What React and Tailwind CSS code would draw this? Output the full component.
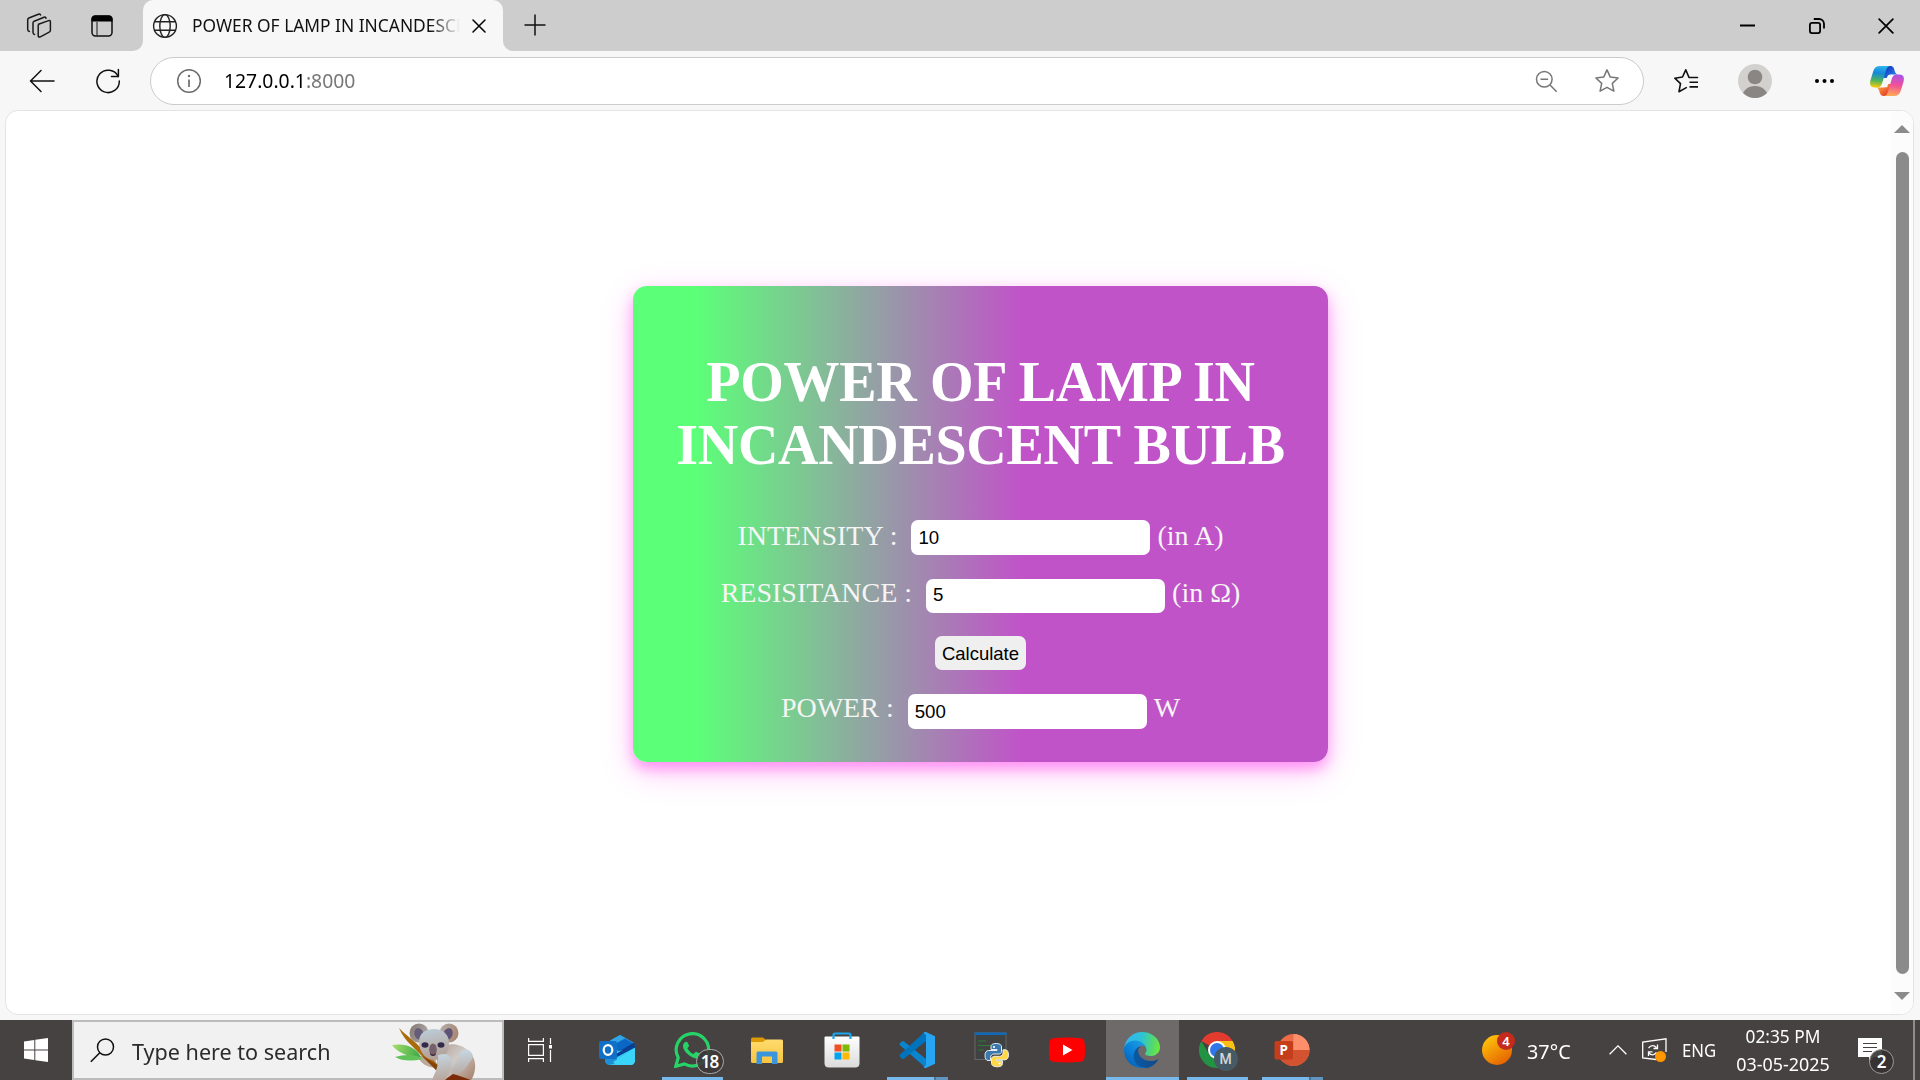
import React from "react";

function Svg({ w, h, box, className = "", children }) {
  return (
    <svg width={w} height={h} viewBox={box || `0 0 ${w} ${h}`} fill="none" className={`block shrink-0 ${className}`}>
      {children}
    </svg>
  );
}

/* ---------- Browser chrome icons ---------- */

const Workspaces = () => (
  <Svg w={26} h={26} className="ml-[26px]">
    <g stroke="#1a1a1a" strokeWidth="1.5" strokeLinejoin="round" strokeLinecap="round">
      <path d="M12.5 11.3 22.6 7.6Q24.4 7 24.4 8.9V17.3Q24.4 18.6 23.2 19.2L14.3 23.8Q12.2 24.8 12.2 22.6V13Q12.2 11.8 13 11.2" />
      <path d="M8.6 21.5Q7 21.3 7 19.6V10.2Q7 8.8 8.2 8.2L18 4.2Q19.6 3.7 20 5.2" />
      <path d="M3.4 18.4Q1.7 18 1.7 16.4V7Q1.7 5.6 2.9 5L12.4 1.2Q14 .7 14.6 2" />
    </g>
  </Svg>
);

const TabActions = () => (
  <Svg w={22} h={22} className="ml-[39px]">
    <rect x="1" y="1" width="20" height="20" rx="3.4" stroke="#111" strokeWidth="1.5" />
    <path d="M.5 6.6V4A3.5 3.5 0 0 1 4 .5H18A3.5 3.5 0 0 1 21.5 4V6.6Z" fill="#000" />
    <path d="M6 7V21" stroke="#333" strokeWidth="1.2" />
  </Svg>
);

const Globe = () => (
  <Svg w={26} h={26} className="ml-[9px]">
    <g stroke="#222" strokeWidth="1.4">
      <circle cx="13" cy="13" r="11.4" />
      <ellipse cx="13" cy="13" rx="5.2" ry="11.4" />
      <path d="M2.6 8.8H23.4M2.6 17.2H23.4" />
    </g>
  </Svg>
);

const Cross = ({ size, className }) => (
  <Svg w={size} h={size} box="0 0 14 14" className={className}>
    <path d="M1 1 13 13M13 1 1 13" stroke="#000" strokeWidth="1.5" strokeLinecap="round" />
  </Svg>
);

function TabStrip() {
  return (
    <div className="flex h-[51px] items-center bg-[#cdcdcd]">
      <div className="flex h-full w-[143px] items-center bg-[#f7f7f7]">
        <div className="flex h-full w-full items-center rounded-br-[10px] bg-[#cdcdcd]">
          <Workspaces />
          <TabActions />
        </div>
      </div>
      <div className="h-full w-[360px] bg-[#cdcdcd]">
        <div className="flex h-full items-center rounded-t-[10px] bg-[#f7f7f7]">
          <Globe />
          <div className="ml-[14px] w-[268px] overflow-hidden [mask-image:linear-gradient(to_right,black_238px,transparent_268px)]">
            <span className="-mt-px block origin-left scale-x-[0.965] font-['Noto_Sans'] text-[18px] leading-6 whitespace-nowrap text-[#111]">
              POWER OF LAMP IN INCANDESCE
            </span>
          </div>
          <Cross size={14} className="ml-[12px]" />
        </div>
      </div>
      <div className="h-full flex-1 bg-[#f7f7f7]">
        <div className="flex h-full items-center rounded-bl-[10px] bg-[#cdcdcd]">
          <Svg w={22} h={22} className="-mt-px ml-[21px]">
            <path d="M11 .5V21.5M.5 11H21.5" stroke="#111" strokeWidth="1.5" />
          </Svg>
          <div className="flex-1" />
          <Svg w={15} h={16} className="mr-[54px]">
            <path d="M0 7.5H15" stroke="#000" strokeWidth="2" />
          </Svg>
          <Svg w={16} h={16} className="mr-[53px]">
            <rect x=".9" y="4.9" width="10.2" height="10.2" rx="2" stroke="#000" strokeWidth="1.8" />
            <path d="M4.8 1H10A5 5 0 0 1 15 6V10.5" stroke="#000" strokeWidth="1.8" />
          </Svg>
          <Cross size={16} className="mr-[26px]" />
        </div>
      </div>
    </div>
  );
}

const Copilot = () => (
  <Svg w={36} h={32} box="0 0 36 32">
    <defs>
      <linearGradient id="cpA" x1="8" y1="0" x2="6" y2="22" gradientUnits="userSpaceOnUse">
        <stop stopColor="#2fb8ee" />
        <stop offset=".35" stopColor="#1588dc" />
        <stop offset=".7" stopColor="#4db45c" />
        <stop offset="1" stopColor="#f1ca10" />
      </linearGradient>
      <linearGradient id="cpB" x1="28" y1="9" x2="25" y2="31" gradientUnits="userSpaceOnUse">
        <stop stopColor="#a652ea" />
        <stop offset=".5" stopColor="#f0509a" />
        <stop offset="1" stopColor="#ffa956" />
      </linearGradient>
      <linearGradient id="cpC" x1="18" y1="1" x2="25" y2="9" gradientUnits="userSpaceOnUse">
        <stop stopColor="#1638b8" />
        <stop offset="1" stopColor="#2672e6" />
      </linearGradient>
      <linearGradient id="cpD" x1="9" y1="23" x2="15" y2="31" gradientUnits="userSpaceOnUse">
        <stop stopColor="#f89a3a" />
        <stop offset="1" stopColor="#e8442e" />
      </linearGradient>
    </defs>
    <path d="M17 1H21.5C24.5 1 25 3.5 25.8 6.2 26.5 8.6 27.5 9.5 30 9.5H22.5C20 9.5 19 10.5 18.2 13H14Z" fill="url(#cpC)" />
    <path d="M19 31H14.5C11.5 31 11 28.5 10.2 25.8 9.5 23.4 8.5 22.5 6 22.5H13.5C16 22.5 17 21.5 17.8 19H22Z" fill="url(#cpD)" />
    <path d="M11 1H21.5C18.5 1 17.6 3.5 16.7 6.5L13.3 17.7C12.2 21.3 11 22.5 7.5 22.5H5.5C1.5 22.5.4 19.5 1.4 15.5L4.3 6C5.4 2.5 7.5 1 11 1Z" fill="url(#cpA)" />
    <path d="M25 31H14.5C17.5 31 18.4 28.5 19.3 25.5L22.7 14.3C23.8 10.7 25 9.5 28.5 9.5H30.5C34.5 9.5 35.6 12.5 34.6 16.5L31.7 26C30.6 29.5 28.5 31 25 31Z" fill="url(#cpB)" />
    <path d="M20.5 9.8H22.8Q21.5 11 20.9 13.2L18.2 22.2H13.5C15.3 21.5 15.8 20 16.4 18L18 12.5Q18.700 10 20.500 9.800Z" fill="#f7f7f7" />
  </Svg>
);

function Toolbar() {
  return (
    <div className="flex h-[59px] items-center bg-[#f7f7f7] pt-[2px] pb-px">
      <Svg w={26} h={24} className="-mt-px ml-[29px]">
        <path d="M25 12H2M12 1.5 1.5 12 12 22.5" stroke="#111" strokeWidth="1.5" strokeLinecap="round" strokeLinejoin="round" />
      </Svg>
      <Svg w={26} h={26} className="ml-[40px]">
        <path d="M23.2 8.5A11.2 11.2 0 1 0 24.3 13" stroke="#111" strokeWidth="1.5" strokeLinecap="round" />
        <path d="M23.4 1.5V8.5H16.5" stroke="#111" strokeWidth="1.5" strokeLinecap="round" strokeLinejoin="round" />
      </Svg>
      <div className="ml-[29px] flex h-[48px] w-[1494px] items-center rounded-full border border-[#cbcbcb] bg-white">
        <Svg w={26} h={26} className="ml-[25px]">
          <circle cx="13" cy="13" r="11.3" stroke="#6b6b6b" strokeWidth="1.5" />
          <path d="M13 11.5V19" stroke="#6b6b6b" strokeWidth="1.7" />
          <circle cx="13" cy="8" r="1.2" fill="#6b6b6b" />
        </Svg>
        <span className="ml-[22px] w-[140px] origin-left scale-x-[0.967] font-['Noto_Sans'] text-[20px] leading-6 whitespace-nowrap text-black">
          127.0.0.1<span className="text-[#777]">:8000</span>
        </span>
        <div className="flex-1" />
        <Svg w={23} h={23} className="mr-[36px]">
          <circle cx="9.3" cy="9.3" r="7.8" stroke="#767676" strokeWidth="1.5" />
          <path d="M5.5 9.3H13.1M15 15 21.7 21.7" stroke="#767676" strokeWidth="1.5" />
        </Svg>
        <Svg w={26} h={26} className="mr-[23px]">
          <path d="M13 1.9 16.3 9.1 24.1 10 18.3 15.4 19.9 23.1 13 19.3 6.1 23.1 7.7 15.4 1.9 10 9.7 9.1Z" stroke="#767676" strokeWidth="1.5" strokeLinejoin="round" />
        </Svg>
      </div>
      <Svg w={26} h={26} className="ml-[29px]">
        <path d="M24.5 9.5H16L12.8 1.8 9.5 9 1.8 10.2 7.5 15.6 6 23.7 13.3 19.6" stroke="#111" strokeWidth="1.6" strokeLinejoin="round" strokeLinecap="round" />
        <path d="M16.5 14.3H25M16.5 18.9H25" stroke="#111" strokeWidth="1.6" />
      </Svg>
      <Svg w={34} h={34} className="ml-[39px]">
        <defs>
          <clipPath id="avatarClip">
            <circle cx="17" cy="17" r="17" />
          </clipPath>
        </defs>
        <circle cx="17" cy="17" r="17" fill="#d3d1ce" />
        <circle cx="17" cy="13" r="7.3" fill="#8a8683" />
        <ellipse cx="17" cy="33" rx="12.8" ry="11" fill="#8a8683" clipPath="url(#avatarClip)" />
      </Svg>
      <Svg w={20} h={6} className="ml-[42px]">
        <circle cx="3" cy="3" r="2" fill="#000" />
        <circle cx="10.5" cy="3" r="2" fill="#000" />
        <circle cx="18" cy="3" r="2" fill="#000" />
      </Svg>
      <div className="ml-[35px]">
        <Copilot />
      </div>
    </div>
  );
}

/* ---------- Page content ---------- */

function Row({ label, value, unit, className, box, text }) {
  return (
    <div className={`flex items-start font-['Liberation_Serif',serif] text-[28px] leading-[28px] text-[#f5f5f5] ${className}`}>
      <span className={`whitespace-pre ${text}`}>{label} : </span>
      <div className={`ml-[7px] flex w-[239px] items-center rounded-[7px] bg-white pl-[7px] font-['Liberation_Sans',sans-serif] text-[18.67px] text-black ${box}`}>
        {value}
      </div>
      <span className={`ml-[7px] ${text}`}>{unit}</span>
    </div>
  );
}

function Card() {
  return (
    <div className="flex h-[476px] w-[695px] flex-col items-center rounded-[14px] bg-[linear-gradient(90deg,#5cff78_9%,#c153c9_56%)] pt-[65px] shadow-[0_7px_14px_rgba(255,0,230,0.34),0_10px_35px_rgba(255,0,230,0.2)]">
      <h1 className="text-center font-['Liberation_Serif',serif] text-[56px] leading-[63px] font-bold tracking-[-0.3px] whitespace-nowrap text-white">
        POWER OF LAMP IN
        <br />
        INCANDESCENT BULB
      </h1>
      <Row label="INTENSITY" value="10" unit="(in A)" className="mt-[43px] h-[35px]" box="h-[35px]" text="mt-[2px]" />
      <Row label="RESISITANCE" value="5" unit="(in Ω)" className="mt-[24px] h-[34px]" box="h-[34px] pb-[2px]" text="mt-0" />
      <div className="mt-[23px] flex h-[34px] w-[91px] items-center justify-center rounded-[7px] bg-[#efefef] pt-[2px] font-['Liberation_Sans',sans-serif] text-[18.5px] leading-none text-black">
        Calculate
      </div>
      <Row label="POWER" value="500" unit="W" className="mt-[24px] h-[35px]" box="h-[35px]" text="mt-0" />
    </div>
  );
}

function Viewport() {
  return (
    <div className="flex h-[910px] bg-[#f7f7f7] pr-[6px] pb-[5px] pl-[5px]">
      <div className="flex flex-1 overflow-hidden rounded-[13px] border border-[#e4e4e4] bg-white">
        <div className="flex flex-1 justify-center pt-[175px] pl-[64px]">
          <Card />
        </div>
        <div className="flex w-[22px] flex-col items-center bg-[#fcfcfc]">
          <Svg w={16} h={8} className="mt-[14px]">
            <path d="M8 0 16 8H0Z" fill="#8b8b8b" />
          </Svg>
          <div className="mt-[19px] h-[822px] w-[13px] rounded-full bg-[#8b8b8b]" />
          <Svg w={16} h={8} className="mt-[18px]">
            <path d="M8 8 16 0H0Z" fill="#8b8b8b" />
          </Svg>
        </div>
      </div>
    </div>
  );
}

/* ---------- Taskbar icons ---------- */

const Koala = () => (
  <Svg w={86} h={58} className="-mb-[3px] self-end">
    <defs>
      <linearGradient id="kBody" x1="50" y1="24" x2="84" y2="56" gradientUnits="userSpaceOnUse">
        <stop stopColor="#b9a69b" />
        <stop offset=".4" stopColor="#cfcac8" />
        <stop offset="1" stopColor="#a57e66" />
      </linearGradient>
      <linearGradient id="kHead" x1="40" y1="6" x2="46" y2="38" gradientUnits="userSpaceOnUse">
        <stop stopColor="#bccbd4" />
        <stop offset="1" stopColor="#b39c92" />
      </linearGradient>
      <linearGradient id="kEar" x1="20" y1="0" x2="66" y2="18" gradientUnits="userSpaceOnUse">
        <stop stopColor="#857974" />
        <stop offset=".5" stopColor="#b5b2b1" />
        <stop offset="1" stopColor="#a8846f" />
      </linearGradient>
      <linearGradient id="kArm" x1="66" y1="26" x2="70" y2="54" gradientUnits="userSpaceOnUse">
        <stop stopColor="#c6dbe8" />
        <stop offset="1" stopColor="#b8a69c" />
      </linearGradient>
      <linearGradient id="kLeaf" x1="0" y1="24" x2="30" y2="34" gradientUnits="userSpaceOnUse">
        <stop stopColor="#a6df68" />
        <stop offset="1" stopColor="#3aa648" />
      </linearGradient>
    </defs>
    <path d="M27 33Q30 44 46 45L44 32Z" fill="#bba89d" />
    <path d="M56 22C70 18 86 30 84 46Q83 54 79 58H46V34Z" fill="url(#kBody)" />
    <path d="M1 22Q22 19 30 34Q10 34 1 22Z" fill="url(#kLeaf)" />
    <path d="M4 34Q20 29 32 36Q14 40 4 34Z" fill="#62c25a" />
    <path d="M8 5 12 9 25 20 48 43V50Q36 38 22 24 12 15 8 5Z" fill="#a96b0c" />
    <path d="M28 31 48 43V50L30 32Z" fill="#874207" />
    <circle cx="28" cy="10" r="9.5" fill="url(#kEar)" />
    <circle cx="58" cy="10" r="9.5" fill="url(#kEar)" />
    <ellipse cx="28" cy="11" rx="4.6" ry="6" fill="#655c7a" transform="rotate(-20 28 11)" />
    <ellipse cx="57" cy="11" rx="4.6" ry="6" fill="#5d5374" transform="rotate(20 57 11)" />
    <path d="M28 19C28 9 36 6 43 6S58 10 58 20C58 32 50 37 43 37S28 30 28 19Z" fill="url(#kHead)" />
    <ellipse cx="34" cy="22" rx="3.5" ry="2.8" fill="#352a49" />
    <ellipse cx="50" cy="22" rx="3.5" ry="2.8" fill="#352a49" />
    <ellipse cx="42" cy="26.5" rx="3.8" ry="6" fill="#75616a" />
    <path d="M39 30Q42 33 45 30Q45 33 42 33T39 30Z" fill="#3b2340" />
    <path d="M52 58 62 51Q70 53 82 58Z" fill="#7c2b08" />
    <path d="M47 32Q60 28 61 40C60 50 56 52 54 58H41C43 50 48 46 47 32Z" fill="url(#kArm)" />
    <path d="M69 30Q74 24 79 28 85 33 78 40 71 52 63 51 58 50 61 45 68 40 69 30Z" fill="url(#kArm)" />
  </Svg>
);

const TaskView = () => (
  <Svg w={24} h={24}>
    <g stroke="#fff" strokeWidth="1.2">
      <path d="M.6 0V3.4H15.4V0M.6 24V20.6H15.4V24M.6 6.6H15.4V17.4H.6ZM22.5 0V6M22.5 12V24" />
    </g>
    <rect x="21" y="7" width="3" height="3.5" fill="#fff" />
  </Svg>
);

const Outlook = () => (
  <Svg w={36} h={32}>
    <path d="M7 9 21 1 35 9 36 14 16 24 6 18Z" fill="#28a8ea" />
    <path d="M12 6 21 1 35 9 20 18 12 14Z" fill="#31a5e8" />
    <path d="M14 11 26 4.5 34 9 20 18Z" fill="#0a68c4" />
    <path d="M17 19 35 8.5 36 14 19 24Z" fill="#0a3e92" />
    <path d="M6 20 36 13.5V26Q36 31 31 31H12Q6 31 6 25Z" fill="#37c9f2" />
    <path d="M17 20 35 9 36 13.5 18 23Z" fill="#0a3e92" />
    <path d="M6 22H18V29L10 31Q6 30 6 25Z" fill="#1d8fd6" />
    <path d="M36 14 14 28 17 31H31Q36 31 36 26Z" fill="#3bd5f8" />
    <rect x="0" y="7" width="18" height="18" rx="2" fill="#1070c8" />
    <ellipse cx="9" cy="16" rx="4.3" ry="4.8" stroke="#fff" strokeWidth="2.2" />
  </Svg>
);

const WhatsApp = () => (
  <div className="relative">
    <Svg w={36} h={36}>
      <path d="M1.8 34.3 4.2 25.6A16.2 16.2 0 1 1 10.4 31.9Z" stroke="#25d366" strokeWidth="3.2" />
      <path d="M12.5 9.8C11 9.5 9 11.5 9 14c0 3 3 7 6 9.3 3.5 2.6 7.5 4 9.7 2.5 2-1.2 2.3-3.8 1.3-4.3l-3.4-1.6c-.8-.3-1.2 0-1.7.6l-1.3 1.6c-2.3-.8-5.2-3.5-6.2-5.8l1.4-1.9c.3-.5.2-1 0-1.5L13.6 10.5Z" fill="#25d366" />
    </Svg>
    <div className="absolute top-[17px] left-[22px] flex h-[25px] w-[28px] items-center justify-center rounded-full border border-[#aaa] bg-[#3d3a3a]/90 font-['Noto_Sans'] text-[17px] leading-none font-semibold tracking-[-1px] text-white">
      18
    </div>
  </div>
);

const Explorer = () => (
  <Svg w={32} h={27}>
    <defs>
      <linearGradient id="folder" x1="0" y1="4" x2="0" y2="26" gradientUnits="userSpaceOnUse">
        <stop stopColor="#ffda6c" />
        <stop offset="1" stopColor="#f8c440" />
      </linearGradient>
    </defs>
    <path d="M0 2Q0 .5 1.5.5H12L15 3 13 6H0Z" fill="#dc9a05" />
    <path d="M0 5H12L15 2.5H30.5Q32 2.5 32 4V24.5Q32 26 30.5 26H1.5Q0 26 0 24.5Z" fill="url(#folder)" />
    <path d="M5.5 27V16Q5.5 14.5 7 14.5H25Q26.5 14.5 26.5 16V27H21V19.5H11V27Z" fill="#3b95dc" />
  </Svg>
);

const Store = () => (
  <Svg w={36} h={36}>
    <defs>
      <linearGradient id="bag" x1="0" y1="4" x2="0" y2="36" gradientUnits="userSpaceOnUse">
        <stop stopColor="#fff" />
        <stop offset="1" stopColor="#dadada" />
      </linearGradient>
    </defs>
    <path d="M.5 5.5Q.5 4.5 1.5 4.5H34.5Q35.5 4.5 35.5 5.5V31Q35.5 35.5 31 35.5H5Q.5 35.5.5 31Z" fill="url(#bag)" />
    <path d="M9.5 7V3Q9.5 1.5 11 1.5H25Q26.5 1.5 26.5 3V7" stroke="#1aa6ee" strokeWidth="2.2" />
    <rect x="10.5" y="12.5" width="7" height="7" fill="#f25022" />
    <rect x="18.5" y="12.5" width="7" height="7" fill="#7fba00" />
    <rect x="10.5" y="20.5" width="7" height="7" fill="#00a4ef" />
    <rect x="18.5" y="20.5" width="7" height="7" fill="#ffb900" />
  </Svg>
);

const VSCode = () => (
  <Svg w={36} h={36}>
    <path d="M.7 23 4 27 27 9V0Z" fill="#0069b0" />
    <path d="M.7 13Q0 12 1 11.2L3 9.3Q3.9 8.8 4.8 9.3L27 27V36Z" fill="#0a84cf" />
    <path d="M.7 23Q0 24 1 24.8L3 26.7Q3.9 27.2 4.8 26.7L27 9V.5L25 .5Z" fill="#0073bd" />
    <path d="M27 0 36 4.2V31.8L27 36Q25.5 36.2 24.5 35L27 33V3L24.5 1Q25.5-.2 27 0Z" fill="#27a5f3" />
  </Svg>
);

const PythonConsole = () => (
  <Svg w={35} h={36}>
    <rect x="1" y="1" width="31" height="26.5" fill="#3f4241" stroke="#62676a" />
    <rect x=".5" y=".5" width="32" height="2.5" fill="#0e6ab8" />
    <path d="M4 9H12M4 13.5H17M4 18H10" stroke="#2f7a37" strokeWidth="1.2" />
    <g stroke="#e8eef2" strokeWidth="1" strokeLinejoin="round">
      <path d="M22.5 11.5c-5 0-5.5 1.8-5.5 3.5v2.5h6v1h-8.5c-2 0-3.5 1.7-3.5 5 0 3.2 1.3 5 3 5h2.5v-3c0-2 1.5-3.5 3.5-3.5h5c1.7 0 2.5-1 2.5-2.5v-4.5c0-2-1.5-3.5-5-3.5Z" fill="#3a78ad" />
      <path d="M23 34.8c5 0 5.5-1.8 5.5-3.5v-2.5h-6v-1H31c2 0 3.5-1.7 3.5-5 0-3.2-1.3-5-3-5H29v3c0 2-1.5 3.5-3.5 3.5h-5c-1.7 0-3 1-3 2.5v4.5c0 2 2 3.5 5.5 3.5Z" fill="#ffd848" />
    </g>
    <circle cx="20" cy="15" r="1.1" fill="#fff" />
    <circle cx="25.5" cy="31.5" r="1.1" fill="#fff" />
  </Svg>
);

const YouTube = () => (
  <Svg w={36} h={26}>
    <path d="M4 1.2Q18-.4 32 1.2 35 1.7 35.5 5 36.5 13 35.5 21 35 24.3 32 24.8 18 26.4 4 24.8 1 24.3.5 21-.5 13 .5 5 1 1.7 4 1.2Z" fill="#f00" />
    <path d="M14 7.5 23.5 13 14 18.5Z" fill="#fff" />
  </Svg>
);

const Edge = () => (
  <Svg w={36} h={36} box="0 0 256 256">
    <defs>
      <linearGradient id="egA" x1="63" y1="177" x2="241" y2="177" gradientUnits="userSpaceOnUse">
        <stop stopColor="#0c59a4" />
        <stop offset="1" stopColor="#114a8b" />
      </linearGradient>
      <linearGradient id="egB" x1="157" y1="100" x2="46" y2="220" gradientUnits="userSpaceOnUse">
        <stop stopColor="#1b9de2" />
        <stop offset=".6" stopColor="#0a80d8" />
        <stop offset="1" stopColor="#0669c0" />
      </linearGradient>
      <linearGradient id="egC" x1="10" y1="60" x2="250" y2="110" gradientUnits="userSpaceOnUse">
        <stop stopColor="#35b5f0" />
        <stop offset=".45" stopColor="#2cc3d5" />
        <stop offset=".8" stopColor="#55d86c" />
        <stop offset="1" stopColor="#68ea42" />
      </linearGradient>
    </defs>
    <path d="M235.7 195.5a93.7 93.7 0 0 1-10.6 4.7 101.9 101.9 0 0 1-35.9 6.4c-47.3 0-88.5-32.5-88.5-74.3a31.5 31.5 0 0 1 16.4-27.3c-42.8 1.8-53.8 46.4-53.8 72.5 0 73.9 68 81.4 82.8 81.4 8 0 19.9-2.3 27.1-4.6l1.3-.4a128.3 128.3 0 0 0 66.6-52.8 4 4 0 0 0-5.4-5.6Z" fill="url(#egA)" />
    <path d="M105.7 241.4a79.2 79.2 0 0 1-22.7-21.3 80.7 80.7 0 0 1 29.5-120c3.2-1.5 8.5-4.1 15.6-4a32.4 32.4 0 0 1 25.7 13 31.9 31.9 0 0 1 6.3 18.7c0-.2 24.5-79.6-80-79.6-43.9 0-80 41.6-80 78.2a130.2 130.2 0 0 0 12.1 56 128 128 0 0 0 156.4 67 75.5 75.5 0 0 1-62.9-8Z" fill="url(#egB)" />
    <path d="M152.3 148.9c-.9 1-3.4 2.5-3.4 5.6 0 2.6 1.7 5.2 4.8 7.3 14.3 10 41.4 8.6 41.5 8.6a59.6 59.6 0 0 0 30.3-8.3 61.4 61.4 0 0 0 30.4-52.9c.3-22.4-8-37.3-11.3-43.9C223.5 23.9 177.7 0 128 0A128 128 0 0 0 0 126.2c.5-36.5 36.8-66 80-66 3.5 0 23.5.3 42 10.1 16.3 8.6 24.9 18.9 30.8 29.2 6.2 10.7 7.3 24.1 7.3 29.5 0 5.3-2.7 13.3-7.8 19.9Z" fill="url(#egC)" />
  </Svg>
);

const Chrome = () => (
  <div className="relative">
    <Svg w={36} h={36}>
      <path d="M18 18 2.4 9A18 18 0 0 1 33.6 9Z" fill="#e33b2e" />
      <path d="M18 9H33.6A18 18 0 0 1 18 36L25.8 22.5Z" fill="#fbc116" />
      <path d="M25.8 22.5 18 36A18 18 0 0 1 2.4 9L10.2 22.5Z" fill="#229342" />
      <circle cx="18" cy="18" r="9" fill="#fff" />
      <circle cx="18" cy="18" r="7" fill="#2f76ea" />
    </Svg>
    <div className="absolute top-[15px] left-[15px] flex h-[24px] w-[24px] items-center justify-center rounded-full bg-[#455a64] font-['Roboto'] text-[14px] leading-none font-medium text-[#cfd8dc]">
      M
    </div>
  </div>
);

const PowerPoint = () => (
  <Svg w={36} h={34}>
    <circle cx="19.5" cy="17" r="16" fill="#ed6c47" />
    <path d="M19.5 1A16 16 0 0 1 35.5 17H19.5Z" fill="#ff8f6b" />
    <path d="M35.5 17A16 16 0 0 1 3.5 17Z" fill="#d35230" />
    <rect x=".5" y="8" width="18.5" height="18.5" rx="1.8" fill="#c43e1c" />
    <text x="9.7" y="22" textAnchor="middle" fill="#fff" fontFamily="Noto Sans" fontSize="13.5" fontWeight="700">
      P
    </text>
  </Svg>
);

function Slot({ children, bar, active }) {
  return (
    <div className="flex w-[75px] justify-center">
      <div className={`flex h-full flex-col items-center ${active ? "w-[73px] bg-[#6e6a69]" : "w-[61px]"}`}>
        <div className="flex h-[57px] items-center pt-[3px] pr-[2px]">{children}</div>
        {bar && (
          <div className="flex h-[3px] w-full">
            <div className="flex-1 bg-[#76b9ed]" />
            {bar === "multi" && <div className="w-[14px] border-l-2 border-[#4a7593] bg-[#5f95bf]" />}
          </div>
        )}
      </div>
    </div>
  );
}

function Taskbar() {
  return (
    <div className="flex h-[60px] overflow-hidden bg-[#464241] font-['Noto_Sans',sans-serif] text-white">
      <div className="flex w-[72px] items-center justify-center">
        <Svg w={24} h={24}>
          <path d="M0 3.5 10.3 2V11.5H0ZM11.3 1.8 24 0V11.5H11.3ZM0 12.5H10.3V22L0 20.5ZM11.3 12.5H24V24L11.3 22.2Z" fill="#fff" />
        </Svg>
      </div>
      <div className="flex w-[432px] items-center border-2 border-[#bcbcbc] bg-[#f1f1f1]">
        <Svg w={25} h={25} className="ml-[16px]">
          <circle cx="15.5" cy="9" r="8" stroke="#111" strokeWidth="1.5" />
          <path d="M9.8 14.7.8 23.8" stroke="#111" strokeWidth="1.6" />
        </Svg>
        <span className="mt-px ml-[17px] w-[259px] origin-left scale-x-[0.98] text-[22px] leading-7 whitespace-nowrap text-[#2b2b2b]">
          Type here to search
        </span>
        <Koala />
      </div>
      <div className="flex w-[76px] items-center justify-start pl-[24px]">
        <TaskView />
      </div>
      <Slot><Outlook /></Slot>
      <Slot bar="single"><WhatsApp /></Slot>
      <Slot><Explorer /></Slot>
      <Slot><Store /></Slot>
      <Slot bar="multi"><VSCode /></Slot>
      <Slot><PythonConsole /></Slot>
      <Slot><YouTube /></Slot>
      <Slot bar="single" active><Edge /></Slot>
      <Slot bar="single"><Chrome /></Slot>
      <Slot bar="multi"><PowerPoint /></Slot>

      <div className="ml-[152px] flex items-center">
        <Svg w={34} h={36} className="-mt-[4px]">
          <defs>
            <linearGradient id="sun" x1="5" y1="6" x2="24" y2="34" gradientUnits="userSpaceOnUse">
              <stop stopColor="#ffc60a" />
              <stop offset="1" stopColor="#e45f00" />
            </linearGradient>
          </defs>
          <circle cx="15" cy="20" r="15" fill="url(#sun)" />
          <circle cx="24" cy="11" r="9" fill="#c42b1c" />
          <text x="24" y="15.8" textAnchor="middle" fill="#fff" fontFamily="Noto Sans" fontSize="13" fontWeight="600">
            4
          </text>
        </Svg>
      </div>
      <span className="mt-[18px] ml-[11px] w-[82px] origin-left scale-x-[0.99] text-[20px] leading-7 whitespace-nowrap">37°C</span>
      <Svg w={18} h={10} className="mt-[25px]">
        <path d="M.6 9.3 9 .9 17.4 9.3" stroke="#fff" strokeWidth="1.3" />
      </Svg>
      <Svg w={25} h={25} className="mt-[18px] ml-[15px]">
        <path d="M24 14V.8L.7 4V20L14 21.5" stroke="#fff" strokeWidth="1.3" />
        <path d="M6.5 10Q10.5 5.5 14.5 9.5M15.5 6.5V10.5H11.5M14.5 14.5Q10.5 19 7 15M6.5 18V13.8H10.5" stroke="#fff" strokeWidth="1.3" />
        <circle cx="18.5" cy="18.5" r="5.5" fill="#ff9800" />
      </Svg>
      <span className="mt-[16px] ml-[15px] w-[36px] origin-left scale-x-[0.93] text-[18px] leading-7">ENG</span>
      <div className="ml-[15px] flex w-[100px] flex-col items-center text-[18px] leading-[28px] whitespace-nowrap">
        <span className="mt-[2px] scale-x-[0.96]">02:35 PM</span>
        <span className="scale-x-[0.995]">03-05-2025</span>
      </div>
      <div className="relative mt-[18px] ml-[25px] w-[55px]">
        <Svg w={24} h={25}>
          <path d="M0 0H24V19H16L11 24V19H0Z" fill="#fff" />
          <path d="M5 5.5H19M5 9.5H19M5 13.5H14" stroke="#464241" strokeWidth="1.2" />
        </Svg>
        <div className="absolute top-[11px] left-[11px] flex h-[25px] w-[25px] items-center justify-center rounded-full border border-[#999] bg-[#353232]/90 text-[17px] leading-none font-semibold">
          2
        </div>
      </div>
      <div className="h-full w-[2px] bg-[#8f8c8b]" />
    </div>
  );
}

export default function App() {
  return (
    <div className="flex h-[1080px] w-[1920px] flex-col overflow-hidden">
      <TabStrip />
      <Toolbar />
      <Viewport />
      <Taskbar />
    </div>
  );
}
